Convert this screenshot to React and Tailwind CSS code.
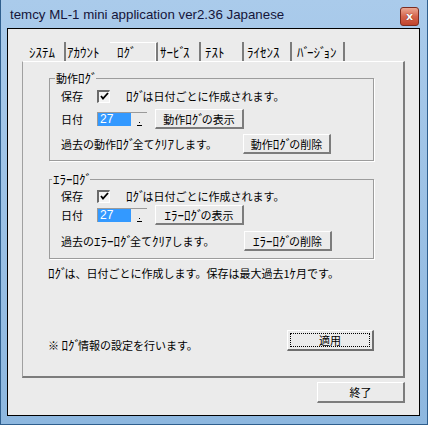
import React from "react";

// half-width katakana are a bit wider in the original UI font; its dakuten is narrow
const H = ({ t }) => (
  <span className="text-[13px] leading-[14px] whitespace-nowrap">
    {t.split("ﾞ").map((part, i) => (
      <React.Fragment key={i}>
        {i > 0 && <span className="tracking-[-3px]">ﾞ</span>}
        {part}
      </React.Fragment>
    ))}
  </span>
);

const Btn = ({ children, className = "" }) => (
  <div
    className={`flex items-center justify-center bg-[#ebebeb] border-t border-l border-r-2 border-b-2 border-t-white border-l-white border-r-[#7c7c7c] border-b-[#7c7c7c] ${className}`}
  >
    {children}
  </div>
);

const Check = () => (
  <div className="w-[13px] h-[13px] flex items-center justify-center bg-[#f4f4f4] border-t-2 border-l-2 border-b border-r border-t-[#6a6a6a] border-l-[#6a6a6a] border-b-white border-r-white">
    <svg width="9" height="9" viewBox="0 0 9 9">
      <path d="M1 4 L3 6.5 L8 1" fill="none" stroke="#000" strokeWidth="1.8" />
    </svg>
  </div>
);

const DateBox = () => (
  <div className="w-[50px] h-[14px] flex border-t border-l border-[#9a9a9a]">
    <div className="w-[33px] bg-[#3399ff] text-white pl-[2px] leading-[13px] font-['Liberation_Sans',sans-serif] text-[12px]">
      27
    </div>
    <div className="flex-1 flex flex-col items-start justify-end pl-[6px]">
      <div className="w-[1px] h-[1px] bg-black ml-[2px] mb-[2px]" />
      <div className="w-[5px] h-[1px] bg-black" />
    </div>
  </div>
);

const LogGroup = ({ name, legendClass, pad, rowGap2, rowGap3, textW }) => (
  <fieldset className="w-[325px] border border-[#9c9c9c] shadow-[1px_1px_0_#fff]">
    <legend className={`px-[1px] leading-[14px] whitespace-nowrap ${legendClass}`}>{name}</legend>
    <div className={`flex flex-col pl-[11px] ${pad}`}>
      <div className="flex items-center h-[16px]">
        <span className="w-[36px]">保存</span>
        <Check />
        <span className="ml-[16px]">
          <H t="ﾛｸﾞ" />は日付ごとに作成されます。
        </span>
      </div>
      <div className={`flex items-center h-[20px] ${rowGap2}`}>
        <span className="w-[36px]">日付</span>
        <DateBox />
        <Btn className="ml-[8px] w-[89px] h-[20px]">
          <span>{name}の表示</span>
        </Btn>
      </div>
      <div className={`flex items-center h-[20px] ${rowGap3}`}>
        <span className={textW}>
          過去の{name}全て<H t="ｸﾘｱ" />します。
        </span>
        <Btn className="w-[88px] h-[20px]">
          <span>{name}の削除</span>
        </Btn>
      </div>
    </div>
  </fieldset>
);

const tabs = [
  { label: "ｼｽﾃﾑ", cls: "w-[39px] pl-[2px] border-r-2 border-r-[#7c7c7c]" },
  { label: "ｱｶｳﾝﾄ", cls: "w-[44px] pl-[1px]" },
  { label: "ﾛｸﾞ", cls: "w-[48px] pl-[7px] border-t border-t-white border-r-2 border-r-[#7c7c7c] shadow-[inset_-1px_0_0_#fff]" },
  { label: "ｻｰﾋﾞｽ", cls: "w-[43px] pl-[2px] border-r-2 border-r-[#7c7c7c]" },
  { label: "ﾃｽﾄ", cls: "w-[43px] pl-[4px] border-r-2 border-r-[#7c7c7c]" },
  { label: "ﾗｲｾﾝｽ", cls: "w-[48px] pl-[3px] border-r-2 border-r-[#7c7c7c]" },
  { label: "ﾊﾞｰｼﾞｮﾝ", cls: "w-[53px] pl-[5px] border-r-2 border-r-[#7c7c7c]" },
];

export default function App() {
  return (
    <div className="w-[428px] h-[425px] flex flex-col whitespace-nowrap bg-gradient-to-b from-[#aacbeb] to-[#8db7df] border-x border-b border-[#2f5f8e] text-[11px] leading-[14px] text-black font-['Noto_Sans_CJK_JP',sans-serif]">
      <div className="h-[28px] flex items-start justify-between pl-[9px] pr-[8px]">
        <span className="mt-[7px] font-['Liberation_Sans',sans-serif] text-[13.3px] leading-[16px] text-[#15153a]">
          temcy ML-1 mini application ver2.36 Japanese
        </span>
        <div className="mt-[7px] w-[19px] h-[19px] rounded-[3px] border border-[#7b2d22] bg-gradient-to-b from-[#eaa894] via-[#d5644c] to-[#c0442c] flex items-center justify-center">
          <span className="text-white text-[11px] leading-[11px] font-bold font-['DejaVu_Sans',sans-serif] [text-shadow:0_0_1px_#400]">
            x
          </span>
        </div>
      </div>

      <div className="flex-1 ml-[6px] mr-[7px] mb-[8px] border border-black bg-[#ebebeb] pl-[14px] pt-[13px] flex flex-col">
        <div className="flex h-[19px] ml-[5px]">
          {tabs.map((t) => (
            <div key={t.label} className={`h-[19px] flex items-center ${t.cls}`}>
              <H t={t.label} />
            </div>
          ))}
        </div>

        <div className="w-[383px] h-[317px] border-t border-l border-r-2 border-b-2 border-t-white border-l-[#a0a0a0] border-r-[#7c7c7c] border-b-[#7c7c7c] flex flex-col pl-[26px] pt-[9px]">
          <LogGroup
            name={<>動作<H t="ﾛｸﾞ" /></>}
            legendClass="ml-[5px]"
            pad="pt-[3px] pb-[6px]"
            rowGap2="mt-[5px]"
            rowGap3="mt-[5px]"
            textW="w-[182px]"
          />
          <div className="mt-[11px]">
            <LogGroup
              name={<H t="ｴﾗｰﾛｸﾞ" />}
              legendClass="ml-[2px]"
              pad="pt-[2px] pb-[7px]"
              rowGap2="mt-[1px]"
              rowGap3="mt-[6px]"
              textW="w-[183px]"
            />
          </div>
          <p className="-ml-[1px] mt-[7px]">
            <H t="ﾛｸﾞ" />は、日付ごとに作成します。保存は最大過去1<H t="ｹ" />月です。
          </p>
          <div className="-ml-[1px] mt-[50px] w-[326px] flex justify-between items-start">
            <span className="mt-[8px]">
              ※ <H t="ﾛｸﾞ" />情報の設定を行います。
            </span>
            <div className="w-[87px] h-[21px] flex p-[2px] bg-[#ebebeb] border-t border-l border-r-2 border-b-2 border-t-white border-l-white border-r-[#6e6e6e] border-b-[#6e6e6e]">
              <div className="flex-1 flex items-center justify-center border border-dotted border-black">
                適用
              </div>
            </div>
          </div>
        </div>

        <div className="w-[383px] flex justify-end mt-[4px]">
          <Btn className="w-[88px] h-[21px]">終了</Btn>
        </div>
      </div>
    </div>
  );
}
